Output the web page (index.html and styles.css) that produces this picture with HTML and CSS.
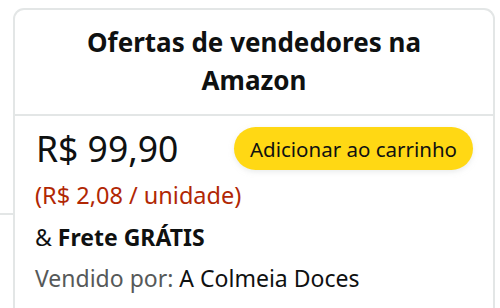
FILE: index.html
```
<!DOCTYPE html>
<html lang="pt-BR">
<head>
<meta charset="utf-8">
<link rel="stylesheet" href="styles.css">
</head>
<body>
<div class="page">
  <div class="side"><div class="rule"></div></div>
  <div class="card">
    <div class="card-head">
      <h2 class="title">Ofertas de vendedores na Amazon</h2>
    </div>
    <div class="card-body">
      <div class="price-row">
        <span class="price">R$ 99,90</span>
        <button class="cart-btn">Adicionar ao carrinho</button>
      </div>
      <div class="unit">(R$ 2,08 / unidade)</div>
      <div class="ship">&amp; <b>Frete GRÁTIS</b></div>
      <div class="seller"><span class="label">Vendido por:</span> A Colmeia Doces</div>
    </div>
  </div>
</div>
</body>
</html>
```
FILE: styles.css
```
html, body {
  margin: 0;
  padding: 0;
  background: #fff;
  height: 308px;
  overflow: hidden;
}
body {
  font-family: "Noto Sans", "Open Sans", sans-serif;
  color: #0f1111;
}
.page {
  display: flex;
  padding: 8px 5px 0 0;
  height: 300px;
}
.side {
  width: 13px;
  flex: none;
}
.rule {
  margin-top: 205px;
  height: 2px;
  background: #e3e6e6;
}
.card {
  flex: 1;
  border: 2px solid #e3e6e6;
  border-bottom: none;
  border-radius: 11px 11px 0 0;
}
.card-head {
  border-bottom: 2px solid #e3e6e6;
  padding: 13px 30px 15px;
  text-align: center;
}
.title {
  margin: 0;
  font-size: 26px;
  font-weight: 700;
  line-height: 38px;
}
.card-body {
  padding: 11px 20px 0 20px;
}
.price-row {
  display: flex;
  justify-content: space-between;
  align-items: center;
}
.price {
  font-size: 35.5px;
  line-height: 43px;
  padding-left: 1px;
}
.cart-btn {
  font-family: inherit;
  font-size: 20.5px;
  color: #0f1111;
  background: #ffd814;
  border: none;
  border-radius: 22px;
  height: 43px;
  padding: 0 16px;
  box-shadow: 0 2px 5px rgba(213, 217, 217, 0.5);
}
.unit {
  color: #b12704;
  font-size: 23.5px;
  line-height: 30px;
  margin-top: 10px;
}
.ship {
  font-size: 23px;
  line-height: 30px;
  margin-top: 12px;
}
.seller {
  font-size: 23px;
  line-height: 30px;
  margin-top: 11px;
}
.label {
  color: #565959;
}
```
